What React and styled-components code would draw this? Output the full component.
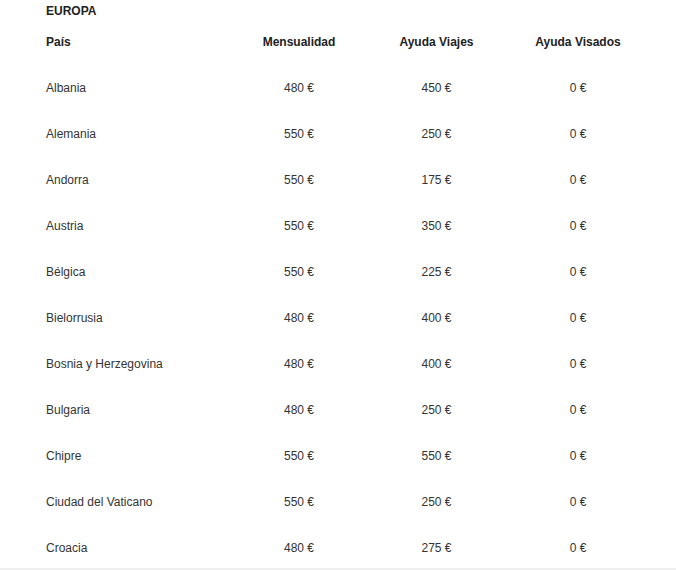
import styled, { createGlobalStyle } from "styled-components";

const rows = [
  ["Albania", "480 €", "450 €", "0 €"],
  ["Alemania", "550 €", "250 €", "0 €"],
  ["Andorra", "550 €", "175 €", "0 €"],
  ["Austria", "550 €", "350 €", "0 €"],
  ["Bélgica", "550 €", "225 €", "0 €"],
  ["Bielorrusia", "480 €", "400 €", "0 €"],
  ["Bosnia y Herzegovina", "480 €", "400 €", "0 €"],
  ["Bulgaria", "480 €", "250 €", "0 €"],
  ["Chipre", "550 €", "550 €", "0 €"],
  ["Ciudad del Vaticano", "550 €", "250 €", "0 €"],
  ["Croacia", "480 €", "275 €", "0 €"],
];

const App = () => {
  return (
    <>
      <GlobalStyle />
      <Page>
        <Region>EUROPA</Region>
        <Table>
          <HeadRow>
            <Cell $head>País</Cell>
            <Cell $head $center>Mensualidad</Cell>
            <Cell $head $center>Ayuda Viajes</Cell>
            <Cell $head $center>Ayuda Visados</Cell>
          </HeadRow>
          {rows.map(([country, monthly, travel, visa]) => (
            <Row key={country}>
              <Cell>{country}</Cell>
              <Cell $center>{monthly}</Cell>
              <Cell $center>{travel}</Cell>
              <Cell $center>{visa}</Cell>
            </Row>
          ))}
        </Table>
      </Page>
    </>
  );
};

export default App;

const GlobalStyle = createGlobalStyle`
  body {
    margin: 0;
    background: #fff;
    font-family: "Liberation Sans", Arial, sans-serif;
    font-size: 12px;
    color: #333;
  }
`;

const Page = styled.div`
  width: 676px;
  padding-top: 3px;
`;

const Region = styled.div`
  padding-left: 46px;
  font-weight: 700;
  line-height: 17px;
  color: #222;
`;

const Table = styled.div`
  border-bottom: 2px solid #efefef;
`;

const Row = styled.div`
  display: grid;
  grid-template-columns: 184px 138px 137px 146px;
  padding: 18px 0 11px 46px;
  line-height: 17px;
`;

const HeadRow = styled(Row)`
  padding-top: 14px;
  padding-bottom: 11px;
  font-weight: 700;
  color: #222;
`;

const Cell = styled.div`
  text-align: ${(p) => (p.$center ? "center" : "left")};
  white-space: nowrap;
`;
